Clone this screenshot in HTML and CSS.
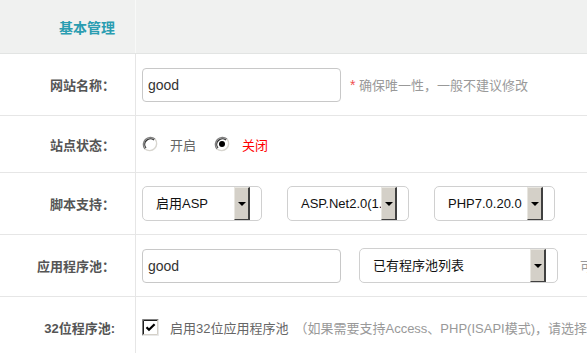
FILE: index.html
```html
<!DOCTYPE html>
<html>
<head>
<meta charset="utf-8">
<link rel="stylesheet" href="styles.css">
</head>
<body>
<div class="form">
  <div class="row row-head">
    <div class="label head-label">基本管理</div>
    <div class="cell"></div>
  </div>

  <div class="row row-tall">
    <div class="label">网站名称：</div>
    <div class="cell">
      <div class="input">good</div>
      <span class="hint"><span class="star">*</span> 确保唯一性，一般不建议修改</span>
    </div>
  </div>

  <div class="row row-short">
    <div class="label">站点状态：</div>
    <div class="cell">
      <label class="radio">
        <svg width="16" height="16" viewBox="0 0 16 16"><circle cx="8" cy="8" r="7" fill="#fff"/><path d="M13 3A7.1 7.1 0 0 0 3 13" fill="none" stroke="#808080" stroke-width="1.4"/><path d="M3 13A7.1 7.1 0 0 0 13 3" fill="none" stroke="#d8d6d0" stroke-width="1.4"/><path d="M12 4A5.7 5.7 0 0 0 4 12" fill="none" stroke="#303030" stroke-width="1.2"/></svg>
        <span class="radio-text">开启</span>
      </label>
      <label class="radio">
        <svg width="16" height="16" viewBox="0 0 16 16"><circle cx="8" cy="8" r="7" fill="#fff"/><path d="M13 3A7.1 7.1 0 0 0 3 13" fill="none" stroke="#808080" stroke-width="1.4"/><path d="M3 13A7.1 7.1 0 0 0 13 3" fill="none" stroke="#d8d6d0" stroke-width="1.4"/><path d="M12 4A5.7 5.7 0 0 0 4 12" fill="none" stroke="#303030" stroke-width="1.2"/><circle cx="8" cy="8" r="3" fill="#000"/></svg>
        <span class="radio-text red">关闭</span>
      </label>
    </div>
  </div>

  <div class="row row-tall">
    <div class="label">脚本支持：</div>
    <div class="cell gap25">
      <div class="sel w120"><span class="sel-text">启用ASP</span><span class="sel-btn"><i class="tri"></i></span></div>
      <div class="sel w122"><span class="sel-text">ASP.Net2.0(1.1)</span><span class="sel-btn"><i class="tri"></i></span></div>
      <div class="sel w121"><span class="sel-text">PHP7.0.20.0</span><span class="sel-btn"><i class="tri"></i></span></div>
    </div>
  </div>

  <div class="row row-tall">
    <div class="label">应用程序池：</div>
    <div class="cell">
      <div class="input">good</div>
      <div class="sel w199 ml18"><span class="sel-text">已有程序池列表</span><span class="sel-btn"><i class="tri"></i></span></div>
      <span class="hint ml22">可选择已有的程序池</span>
    </div>
  </div>

  <div class="row row-last">
    <div class="label">32位程序池:</div>
    <div class="cell">
      <span class="check">
        <svg width="17" height="17" viewBox="0 0 17 17"><rect x="0" y="0" width="17" height="17" fill="#f4f4f4"/><path d="M0.5 16.5V0.5H16.5" fill="none" stroke="#808080"/><path d="M1.5 15.5V1.5H15.5" fill="none" stroke="#202020"/><path d="M16.5 0.5V16.5H0.5" fill="none" stroke="#e8e8e8"/><path d="M15.5 1.5V15.5H1.5" fill="none" stroke="#d4d0c8"/><rect x="2" y="2" width="13" height="13" fill="#fff"/><path d="M4.5 8.2L7 10.8L12.6 5.2" fill="none" stroke="#000" stroke-width="2.2"/></svg>
      </span>
      <span class="check-text">启用32位应用程序池</span>
      <span class="note">（如果需要支持Access、PHP(ISAPI模式)，请选择开启）</span>
    </div>
  </div>
</div>
</body>
</html>
```

FILE: styles.css
```css
html, body {
  margin: 0;
  padding: 0;
  background: #fff;
}
body {
  width: 587px;
  height: 353px;
  overflow: hidden;
  font-family: "Liberation Sans", "Noto Sans CJK SC", sans-serif;
  color: #333;
}
.form {
  display: flex;
  flex-direction: column;
}
.row {
  display: flex;
  border-bottom: 1px solid #e6e6e6;
}
.row-head {
  height: 53px;
  background: #f0f1f0;
  border-bottom-color: #e2e4e3;
}
.row-head .label {
  border-right-color: #f8f9f8;
}
.row-tall { height: 61px; }
.row-short { height: 56px; }
.row-last { height: 60px; border-bottom: none; }

.label {
  width: 115px;
  flex: none;
  padding-right: 20px;
  border-right: 1px solid #e6e6e6;
  display: flex;
  align-items: center;
  justify-content: flex-end;
  font-size: 13px;
  font-weight: bold;
  color: #555;
  white-space: nowrap;
}
.head-label {
  font-size: 14px;
  color: #2a9db1;
}
.cell {
  flex: 1;
  min-width: 0;
  display: flex;
  align-items: center;
  padding-left: 6px;
  white-space: nowrap;
  overflow: hidden;
}
.gap25 { gap: 25px; }

.input {
  width: 199px;
  height: 34px;
  box-sizing: border-box;
  flex: none;
  border: 1px solid #c8c8c8;
  border-radius: 4px;
  padding-left: 5px;
  font-size: 14px;
  line-height: 32px;
  color: #333;
}
.hint {
  margin-left: 9px;
  font-size: 13px;
  color: #999;
}
.star { color: #f05050; font-size: 14px; }
.ml18 { margin-left: 18px; }
.ml22 { margin-left: 22px; }

.radio {
  display: flex;
  align-items: center;
  margin-right: 18px;
}
.radio svg { display: block; }
.radio-text {
  margin-left: 12px;
  font-size: 13px;
  color: #666;
  font-family: "Noto Sans CJK SC", sans-serif;
}
.radio-text.red { color: #f00; }

.sel {
  display: flex;
  flex: none;
  height: 35px;
  box-sizing: border-box;
  border: 1px solid #d0d0d0;
  border-radius: 5px;
  padding: 0 11px 0 0;
  font-size: 13px;
  color: #111;
}
.w120 { width: 120px; }
.w121 { width: 121px; }
.w122 { width: 122px; }
.w199 { width: 199px; }
.sel-text {
  flex: 1;
  min-width: 0;
  overflow: hidden;
  padding-left: 13px;
  line-height: 33px;
}
.sel-btn {
  width: 16px;
  flex: none;
  box-sizing: border-box;
  background: #d4d0c8;
  border-top: 1px solid #e8e6e0;
  border-left: 1px solid #e8e6e0;
  border-right: 2px solid #404040;
  border-bottom: 1px solid #404040;
  display: flex;
  align-items: center;
  justify-content: center;
}
.tri {
  width: 0;
  height: 0;
  border-left: 4px solid transparent;
  border-right: 4px solid transparent;
  border-top: 4px solid #000;
}

.check { display: flex; }
.check svg { display: block; }
.check-text {
  margin-left: 11px;
  font-size: 13px;
  color: #666;
}
.note {
  margin-left: 6px;
  font-size: 13px;
  color: #999;
}
```
